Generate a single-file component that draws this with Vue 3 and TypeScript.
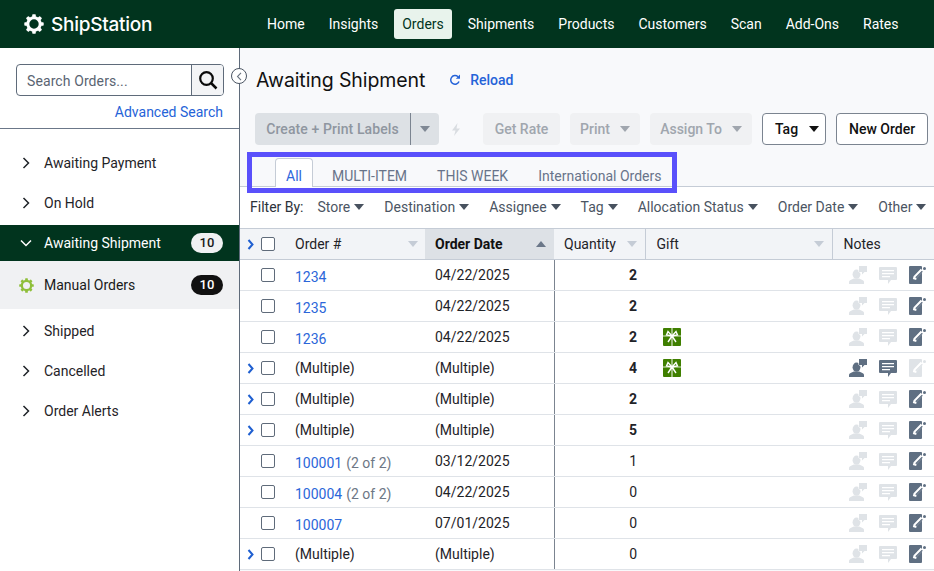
<template>
  <div class="app">
    <svg width="0" height="0" class="defs">
      <defs>
        <symbol id="gear" viewBox="0 0 20 20">
          <circle cx="10" cy="10" r="6.200" fill="none" stroke="currentColor" stroke-width="3" />
          <g fill="currentColor">
            <rect v-for="a in gearTeeth" :key="a" x="8.200" y="0.300" width="3.600" height="4" rx="0.800" :transform="`rotate(${a} 10 10)`" />
          </g>
        </symbol>
        <symbol id="caret" viewBox="0 0 10 6">
          <path fill="currentColor" d="M0 0h10L5 6z" />
        </symbol>
        <symbol id="assign" viewBox="0 0 18 18">
          <ellipse cx="7.500" cy="8.200" rx="3.900" ry="4.600" fill="currentColor" />
          <path fill="currentColor" d="M0 18v-2.200c0-1.400 2.800-2.300 4.800-3.300h5.400c2 1 4.800 1.900 4.800 3.300V18z" />
          <path fill="currentColor" stroke="#fff" stroke-width="1" paint-order="stroke" d="M10 0h8v6h-2.500L13 8.500V6h-3z" />
        </symbol>
        <symbol id="note" viewBox="0 0 18 17">
          <path fill="currentColor" fill-rule="evenodd" d="M1 0h16a1 1 0 0 1 1 1v11a1 1 0 0 1-1 1h-5l-3 4v-4H1a1 1 0 0 1-1-1V1a1 1 0 0 1 1-1zm2 3v1.300h12V3zm0 3v1.300h12V6zm0 3v1.300h8V9z" />
        </symbol>
        <symbol id="edit" viewBox="0 0 18 18">
          <rect width="13" height="18" rx="1" fill="currentColor" />
          <path d="M5.500 13.500l.6-2.500 6.900-7" fill="none" stroke="#fff" stroke-width="3.400" />
          <path d="M6.800 11.800l6.500-6.500" fill="none" stroke="currentColor" stroke-width="1.300" />
          <circle cx="15.500" cy="2.600" r="1.500" fill="currentColor" />
        </symbol>
        <symbol id="gift" viewBox="0 0 18 18">
          <rect width="18" height="18" rx="1" fill="#3f7f00" />
          <path fill="none" stroke="#fff" stroke-width="1.200" opacity=".8" d="M0 8h18M9 0v18" />
          <path fill="none" stroke="#fff" stroke-width="1.400" d="M9 8L5 3.500 3.500 7zM9 8l4-4.500L14.500 7zM9 8l-4 6M9 8l4 6" />
        </symbol>
      </defs>
    </svg>

    <header class="topbar">
      <div class="logo">
        <svg width="20" height="20" class="logo-gear"><use href="#gear" /></svg>
        <span class="logo-text">ShipStation</span>
      </div>
      <nav class="nav">
        <a v-for="item in navItems" :key="item" class="nav-item" :class="{ active: item === 'Orders' }">{{ item }}</a>
      </nav>
    </header>

    <div class="body">
      <aside class="sidebar">
        <div class="search-area">
          <div class="search">
            <span class="search-input">Search Orders...</span>
            <span class="search-btn">
              <svg width="20" height="20" viewBox="0 0 20 20">
                <circle cx="8.500" cy="8.500" r="6.300" fill="none" stroke="#0b0b0b" stroke-width="2.200" />
                <path d="M13 13l5.500 5.500" stroke="#0b0b0b" stroke-width="2.500" />
              </svg>
            </span>
          </div>
          <a class="adv-search">Advanced Search</a>
        </div>
        <ul class="status-list">
          <li v-for="s in statusBefore" :key="s" class="status">
            <svg class="chev" width="8" height="12" viewBox="0 0 8 12"><path d="M1.500 1l5 5-5 5" fill="none" stroke="currentColor" stroke-width="1.500" /></svg>
            <span>{{ s }}</span>
          </li>
          <li class="status-active">
            <svg class="chev-down" width="12" height="8" viewBox="0 0 12 8"><path d="M1 1.500l5 5 5-5" fill="none" stroke="currentColor" stroke-width="1.500" /></svg>
            <span>Awaiting Shipment</span>
            <b class="count light">10</b>
          </li>
          <li class="status-sub">
            <svg class="sub-gear" width="15" height="15"><use href="#gear" /></svg>
            <span>Manual Orders</span>
            <b class="count dark">10</b>
          </li>
          <li class="status-gap"></li>
          <li v-for="s in statusAfter" :key="s" class="status">
            <svg class="chev" width="8" height="12" viewBox="0 0 8 12"><path d="M1.500 1l5 5-5 5" fill="none" stroke="currentColor" stroke-width="1.500" /></svg>
            <span>{{ s }}</span>
          </li>
        </ul>
      </aside>

      <button class="collapse">
        <svg width="7" height="9" viewBox="0 0 7 9"><path d="M5 .8L1.500 4.500 5 8.200" fill="none" stroke="#6b7480" stroke-width="1.100" /></svg>
      </button>

      <main class="main">
        <div class="title-row">
          <h1>Awaiting Shipment</h1>
          <a class="reload">
            <svg width="12" height="12" viewBox="0 0 12 12"><path d="M10 7.500A4.300 4.300 0 1 1 9 2.800" fill="none" stroke="currentColor" stroke-width="1.500" /><path fill="currentColor" d="M11 .5v4.300H6.800z" /></svg>
            Reload
          </a>
        </div>

        <div class="toolbar">
          <div class="btn-split">
            <span class="split-main">Create + Print Labels</span>
            <span class="split-caret"><svg width="10" height="6"><use href="#caret" /></svg></span>
          </div>
          <svg class="bolt" width="10" height="13" viewBox="0 0 10 13"><path fill="currentColor" d="M6.500 0L1 7.500h3.500L3 13l6-7.500H5.500z" /></svg>
          <span class="btn disabled rate">Get Rate</span>
          <span class="btn disabled print">Print <svg width="10" height="6"><use href="#caret" /></svg></span>
          <span class="btn disabled assign">Assign To <svg width="10" height="6"><use href="#caret" /></svg></span>
          <span class="btn outline tag">Tag <svg width="10" height="6"><use href="#caret" /></svg></span>
          <span class="btn outline">New Order</span>
        </div>

        <div class="tabs">
          <span v-for="t in tabs" :key="t" class="tab" :class="{ active: t === 'All' }">{{ t }}</span>
          <div class="highlight"></div>
        </div>

        <div class="filters">
          <span class="filter-label">Filter By:</span>
          <span v-for="f in filters" :key="f" class="filter">{{ f }}<svg width="10" height="6"><use href="#caret" /></svg></span>
        </div>

        <table class="orders">
          <colgroup>
            <col class="c-check" /><col class="c-order" /><col class="c-date" /><col class="c-qty" /><col class="c-gift" /><col />
          </colgroup>
          <thead>
            <tr>
              <th class="check-cell">
                <svg class="expand" width="7" height="11" viewBox="0 0 7 11"><path d="M1.500 1l4 4.500-4 4.500" fill="none" stroke="currentColor" stroke-width="2" /></svg>
                <span class="box"></span>
              </th>
              <th class="order-th"><div class="th-in">Order # <svg width="10" height="6"><use href="#caret" /></svg></div></th>
              <th class="sorted"><div class="th-in">Order Date <svg class="up" width="10" height="6"><use href="#caret" /></svg></div></th>
              <th><div class="th-in">Quantity <svg width="10" height="6"><use href="#caret" /></svg></div></th>
              <th class="bordered"><div class="th-in">Gift <svg width="10" height="6"><use href="#caret" /></svg></div></th>
              <th class="bordered notes-th">Notes</th>
            </tr>
          </thead>
          <tbody>
            <tr v-for="(o, i) in orders" :key="i">
              <td class="check-cell">
                <svg v-if="o.expand" class="expand" width="7" height="11" viewBox="0 0 7 11"><path d="M1.500 1l4 4.500-4 4.500" fill="none" stroke="currentColor" stroke-width="2" /></svg>
                <span class="box"></span>
              </td>
              <td class="order-td" :class="{ linked: o.link }">
                <a v-if="o.link" class="link">{{ o.order }}</a>
                <template v-else>{{ o.order }}</template>
                <span v-if="o.part" class="part">{{ o.part }}</span>
              </td>
              <td class="date-td">{{ o.date }}</td>
              <td class="qty" :class="{ strong: o.strong }">{{ o.qty }}</td>
              <td class="gift-td">
                <svg v-if="o.gift" class="gift" width="18" height="18"><use href="#gift" /></svg>
              </td>
              <td class="notes-td">
                <div class="note-icons">
                  <svg width="18" height="18" :class="o.active ? 'ic-on' : 'ic-off'"><use href="#assign" /></svg>
                  <svg width="18" height="17" :class="o.active ? 'ic-on' : 'ic-off'"><use href="#note" /></svg>
                  <svg width="18" height="18" :class="o.active ? 'ic-off' : 'ic-on'"><use href="#edit" /></svg>
                </div>
              </td>
            </tr>
          </tbody>
        </table>
      </main>
    </div>
  </div>
</template>

<script setup lang="ts">
interface OrderRow {
  order: string
  part?: string
  link: boolean
  expand: boolean
  date: string
  qty: number
  strong: boolean
  gift?: boolean
  active?: boolean
}

const gearTeeth = [0, 45, 90, 135, 180, 225, 270, 315]
const navItems = ['Home', 'Insights', 'Orders', 'Shipments', 'Products', 'Customers', 'Scan', 'Add-Ons', 'Rates']
const statusBefore = ['Awaiting Payment', 'On Hold']
const statusAfter = ['Shipped', 'Cancelled', 'Order Alerts']
const tabs = ['All', 'MULTI-ITEM', 'THIS WEEK', 'International Orders']
const filters = ['Store', 'Destination', 'Assignee', 'Tag', 'Allocation Status', 'Order Date', 'Other']

const orders: OrderRow[] = [
  { order: '1234', link: true, expand: false, date: '04/22/2025', qty: 2, strong: true },
  { order: '1235', link: true, expand: false, date: '04/22/2025', qty: 2, strong: true },
  { order: '1236', link: true, expand: false, date: '04/22/2025', qty: 2, strong: true, gift: true },
  { order: '(Multiple)', link: false, expand: true, date: '(Multiple)', qty: 4, strong: true, gift: true, active: true },
  { order: '(Multiple)', link: false, expand: true, date: '(Multiple)', qty: 2, strong: true },
  { order: '(Multiple)', link: false, expand: true, date: '(Multiple)', qty: 5, strong: true },
  { order: '100001', part: '(2 of 2)', link: true, expand: false, date: '03/12/2025', qty: 1, strong: false },
  { order: '100004', part: '(2 of 2)', link: true, expand: false, date: '04/22/2025', qty: 0, strong: false },
  { order: '100007', link: true, expand: false, date: '07/01/2025', qty: 0, strong: false },
  { order: '(Multiple)', link: false, expand: true, date: '(Multiple)', qty: 0, strong: false },
]
</script>

<style>
html, body { margin: 0; height: 100%; overflow: hidden; background: #fff; }
</style>

<style scoped>
.app {
  width: 934px;
  height: 571px;
  overflow: hidden;
  display: flex;
  flex-direction: column;
  font-family: Roboto, "Liberation Sans", sans-serif;
  font-size: 14px;
  color: #1a1a1a;
}
.defs { position: absolute; }

.topbar {
  height: 48px;
  flex: none;
  background: #01341e;
  display: flex;
  align-items: center;
  color: #fff;
}
.logo { width: 240px; flex: none; padding-left: 24px; box-sizing: border-box; display: flex; align-items: center; gap: 7px; }
.logo-gear { color: #fff; }
.logo-text { font-family: Inter, sans-serif; font-size: 19px; font-weight: 500; letter-spacing: -0.25px; }
.nav { display: flex; align-items: center; gap: 24px; margin-left: 27px; }
.nav-item { height: 30px; line-height: 30px; font-size: 14px; border-radius: 3px; color: #fff; white-space: nowrap; flex: none; }
.nav-item.active { background: #e8f3ec; color: #01341e; padding: 0 8px; margin: 0 -8px; }

.body { flex: 1; display: flex; position: relative; min-height: 0; }

.sidebar { width: 240px; flex: none; box-sizing: border-box; border-right: 1px solid #5f6b7a; background: #fff; }
.search-area { padding: 16px 15px 0 16px; border-bottom: 1px solid #6b7789; width: 208px; height: 64px; }
.search { display: flex; height: 32px; box-sizing: border-box; border: 1px solid #5f6b7a; border-radius: 4px; overflow: hidden; }
.search-input { flex: 1; padding-left: 10px; line-height: 32px; color: #5a6472; font-size: 14px; letter-spacing: 0.1px; }
.search-btn { width: 31px; background: #f3f4f6; border-left: 1px solid #5f6b7a; display: flex; align-items: center; justify-content: center; }
.adv-search { display: block; text-align: right; margin-top: 8px; padding-right: 1px; color: #2563d8; font-size: 14px; }

.status-list { list-style: none; margin: 0; padding: 14px 0 0; }
.status { height: 40px; display: flex; align-items: center; padding-left: 22px; gap: 14px; font-size: 14px; color: #1f2328; }
.status-active { height: 36px; margin-top: 2px; background: #01341e; color: #fff; display: flex; align-items: center; padding: 0 16px 0 20px; }
.chev-down { margin-right: 12px; }
.status-active span, .status-sub span { flex: 1; }
.status-sub { height: 48px; background: #f0f1f3; display: flex; align-items: center; padding: 0 16px 0 19px; }
.sub-gear { color: #8fbf3a; margin-right: 10px; }
.status-gap { height: 2px; }
.count { width: 32px; height: 20px; line-height: 20px; border-radius: 10px; text-align: center; font-size: 13px; font-weight: 500; }
.count.light { background: #f0f1f3; color: #1a1a1a; }
.count.dark { background: #111; color: #fff; }

.collapse {
  position: absolute;
  left: 231px;
  top: 20px;
  width: 16px;
  height: 16px;
  padding: 0;
  border: 1px solid #4b5563;
  border-radius: 50%;
  background: #fff;
  display: flex;
  align-items: center;
  justify-content: center;
}

.main { flex: 1; min-width: 0; background: #f8f9fb; }
.title-row { height: 64px; display: flex; align-items: center; padding: 0 0 0 16px; box-sizing: border-box; }
h1 { margin: 0; font-family: Inter, sans-serif; font-size: 19.500px; font-weight: 400; color: #111; letter-spacing: -0.1px; white-space: nowrap; }
.reload { display: flex; align-items: center; gap: 9px; margin-left: 24px; color: #2563d8; font-weight: 500; font-size: 14px; }

.toolbar { display: flex; align-items: center; height: 32px; padding: 1px 0 0 15px; color: #8f96a0; }
.btn-split { display: flex; height: 32px; width: 184px; background: #dde1e5; border-radius: 4px; font-weight: 500; letter-spacing: 0.1px; }
.split-main { width: 155px; line-height: 32px; text-align: center; border-right: 1px solid #7b8490; }
.split-caret { flex: 1; display: flex; align-items: center; justify-content: center; color: #7f8894; }
.bolt { margin: 0 22px 0 12px; color: #d9dde1; }
.btn { height: 32px; box-sizing: border-box; display: inline-flex; align-items: center; border-radius: 4px; font-weight: 500; white-space: nowrap; flex: none; }
.btn.disabled { background: #f0f1f3; color: #a0a6ae; justify-content: center; gap: 10px; }
.btn.disabled svg { color: #a0a6ae; }
.rate { width: 77px; margin-right: 10px; }
.print { width: 70px; margin-right: 10px; }
.assign { width: 102px; margin-right: 10px; }
.outline { background: #fff; border: 1px solid #7b8490; color: #111; padding: 0 12px; }
.outline svg { color: #111; }
.tag { width: 64px; margin-right: 10px; padding: 0 0 0 12px; gap: 11px; }

.tabs { position: relative; display: flex; align-items: flex-end; height: 28px; margin-top: 13px; padding-left: 35px; border-bottom: 1px solid #c5ccd6; }
.tab { height: 28px; line-height: 36px; padding: 0 15px; color: #68748a; font-size: 14px; box-sizing: border-box; white-space: nowrap; }
.tab.active { height: 29px; margin-bottom: -1px; background: #fff; color: #2f67dc; border: 1px solid #c5ccd6; border-bottom: none; border-radius: 4px 4px 0 0; padding: 0 10px; line-height: 34px; margin-right: 4px; }
.highlight { position: absolute; left: 7px; top: -6px; width: 430px; height: 41px; box-sizing: border-box; border: 5px solid #5a50fb; pointer-events: none; }

.filters { display: flex; align-items: center; height: 41px; box-sizing: border-box; padding: 0 0 2px 10px; background: #fff; gap: 20px; color: #4b5563; font-size: 14px; white-space: nowrap; }
.filter-label { color: #2c323a; margin-right: -6px; flex: none; }
.filter { display: inline-flex; align-items: center; gap: 4px; flex: none; }
.filter svg { color: #48525f; }

.orders { width: 694px; border-collapse: collapse; table-layout: fixed; background: #fff; }
.c-check { width: 45px; }
.c-order { width: 140px; }
.c-date { width: 129px; }
.c-qty { width: 91px; }
.c-gift { width: 187px; }
th {
  height: 31px;
  padding: 0;
  background: #f2f4f7;
  border-top: 1px solid #c5ccd6;
  border-bottom: 1px solid #c5ccd6;
  font-weight: 400;
  text-align: left;
  color: #1f2328;
  box-sizing: border-box;
}
.th-in { display: flex; align-items: center; justify-content: space-between; padding: 0 8px 0 10px; color: #1f2328; }
.th-in svg { color: #c5ccd6; }
.order-th .th-in { padding-right: 7px; }
.sorted { background: #dde1e6; }
.sorted .th-in { font-weight: 700; color: #111; }
.sorted .th-in svg { color: #6b7789; }
.up { transform: rotate(180deg); }
.bordered { border-left: 1px solid #c5ccd6; }
.bordered .th-in { padding-left: 11px; }
.notes-th { padding-left: 11px; }

td { height: 31px; padding: 0; box-sizing: border-box; border-bottom: 1px solid #dfe3e8; color: #1f2328; white-space: nowrap; }
.check-cell { position: relative; }
.box { position: absolute; left: 21px; top: 8px; width: 14px; height: 14px; box-sizing: border-box; border: 1px solid #5f6b7a; border-radius: 2px; background: #fff; }
.expand { position: absolute; left: 7px; top: 10px; color: #1f5fd0; }
.order-td { padding-left: 10px; }
.order-td.linked { padding-top: 3px; }
.link { color: #2b66d9; }
.part { color: #6d7785; margin-left: 4px; }
.date-td { padding-left: 10px; border-right: 1px solid #7b8490; }
.qty { text-align: right; padding-right: 8px; }
.qty.strong { font-weight: 700; }
.gift-td { padding-left: 18px; }
.gift { display: block; }
.note-icons { display: flex; align-items: center; gap: 12px; padding-left: 17px; }
.ic-on { color: #5f6f82; flex: none; }
.ic-off { color: #dfe3e7; flex: none; }
</style>
